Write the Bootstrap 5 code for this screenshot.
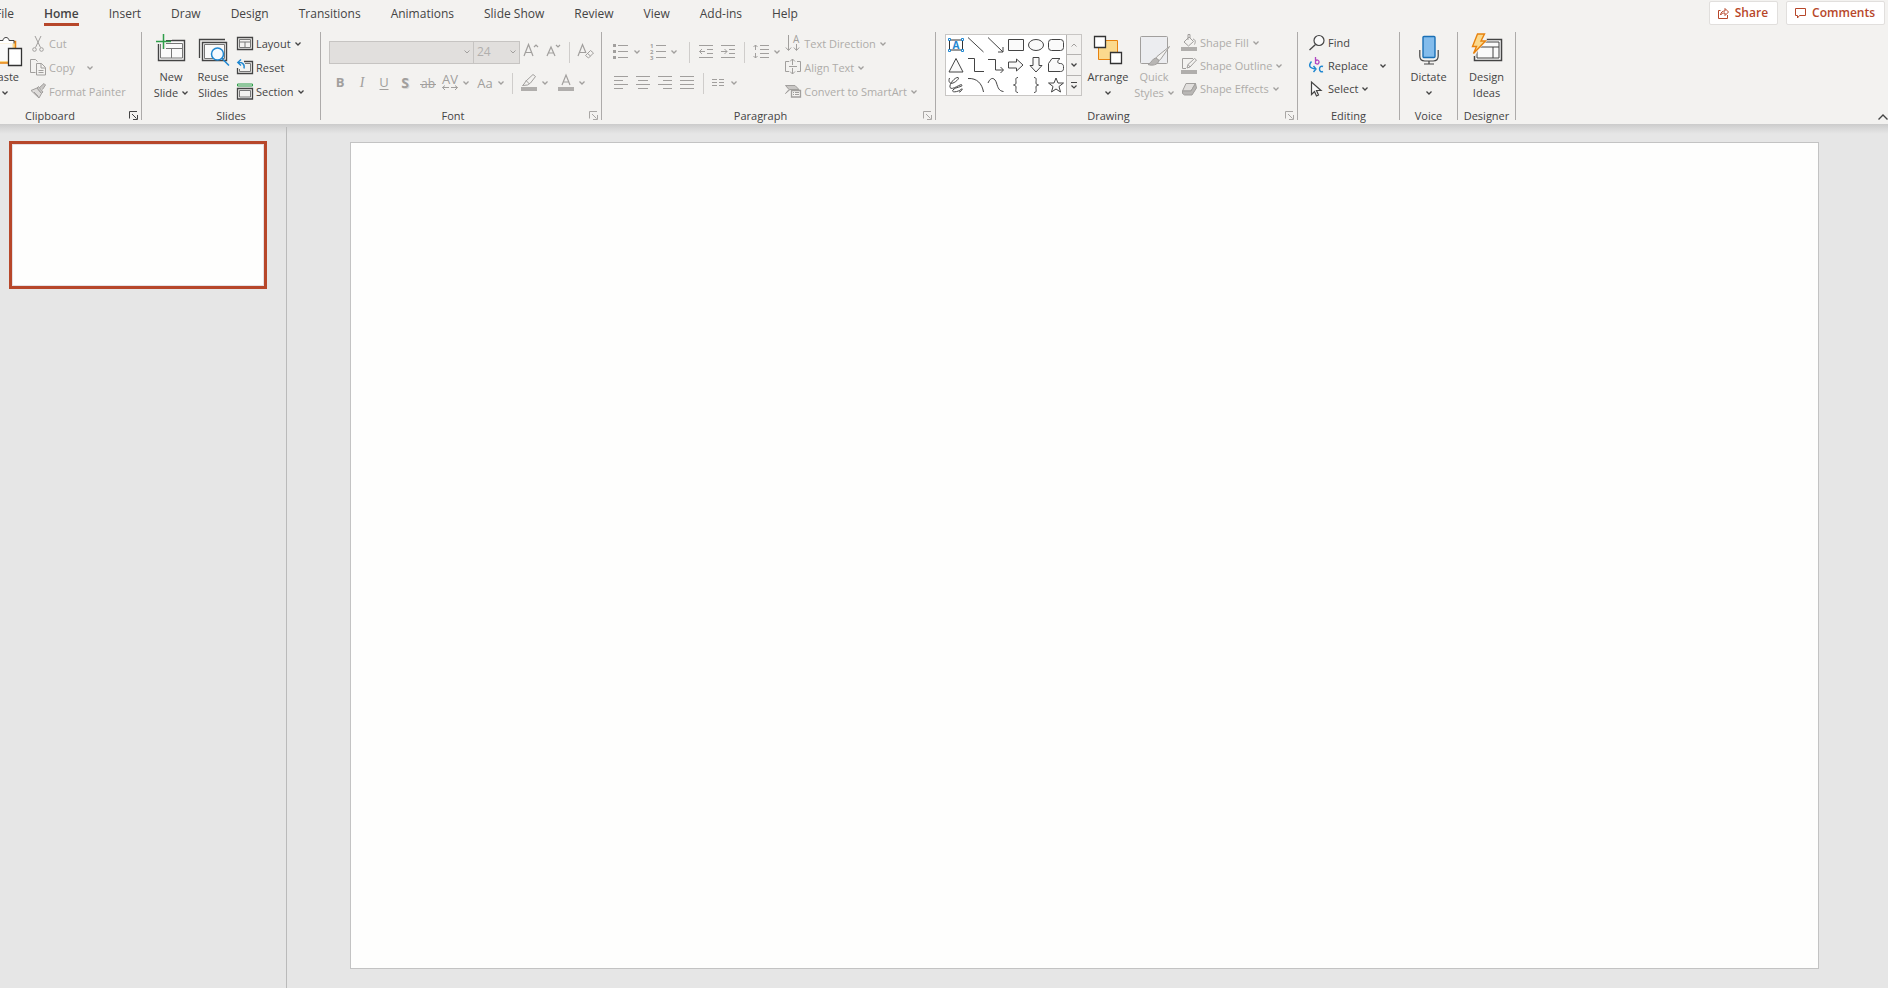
<!DOCTYPE html>
<html lang="en">
<head>
<meta charset="utf-8">
<meta name="viewport" content="width=device-width, initial-scale=1">
<title>Presentation editor</title>
<link href="https://cdn.jsdelivr.net/npm/bootstrap@5.3.0/dist/css/bootstrap.min.css" rel="stylesheet">
<style>
:root{--ink:#444;--dim:#aeaca9;--brand:#b7472a;--line:#adabaa;--panel:#f3f2f0}
body{font-family:"Open Sans","Noto Sans",sans-serif;font-size:11px;line-height:16px;color:var(--ink);background:#e6e6e6;overflow-x:hidden}
svg{display:block;flex:none;overflow:visible;fill:none;stroke:currentColor}
svg text{stroke:none;fill:currentColor}
.ribbon{background:var(--panel);height:124px}

/* tab strip */
.tabs{height:32px;font-size:12px}
.tabs .nav{gap:30px;margin-left:-5px}
.tabs .nav-link{color:var(--ink);padding:5px 0 0;line-height:18px;height:26px;border-bottom:3px solid transparent}
.tabs .nav-link.active{font-weight:600;border-color:var(--brand)}
.top-actions{margin:1px 3px 0 0}
.top-btn{background:#fff;border:1px solid #e1dfdd;border-radius:2px;color:var(--brand);font-size:12px;font-weight:600;line-height:22px;height:24px;padding:0 9px 0 8px;gap:6px}

/* ribbon groups */
.group{border-right:1px solid var(--line);height:88px;display:flex;flex-direction:column;position:relative}
.group-body{flex:1;display:flex}
.group-name{text-align:center;line-height:12px;height:10px}
.launch{position:absolute;right:3px;bottom:0;padding:0;border:0;background:none;color:var(--ink)}
.launch:disabled{color:#a9a7a5}
.has-launch .group-name{padding-right:16px}
.g-clipboard{width:142px}
.g-clipboard .group-name{padding-right:41px}
.g-slides{width:179px}
.g-font{width:281px}
.g-paragraph{width:334px}
.g-drawing{width:362px}
.g-editing{width:102px}
.g-small{width:58px}
.g-slides .group-body,.g-font .group-body,.g-paragraph .group-body,.g-drawing .group-body{padding-left:8px}
.g-paragraph .group-body{padding-right:18px}
.g-editing .group-body{padding-left:11px}

/* ribbon buttons */
.rb{--bs-btn-padding-x:0;--bs-btn-padding-y:0;--bs-btn-font-size:11px;--bs-btn-line-height:16px;--bs-btn-border-width:0;--bs-btn-border-radius:0;--bs-btn-color:var(--ink);--bs-btn-hover-color:var(--ink);--bs-btn-hover-bg:#dddbd9;--bs-btn-disabled-color:var(--dim);--bs-btn-disabled-opacity:1;display:flex;align-items:center;white-space:nowrap}
.rb:disabled svg{color:#a19f9d}
.big{flex-direction:column;justify-content:flex-start;width:42px;padding-top:4px}
.big>svg{margin-bottom:1px}
.big .lbl{display:flex;align-items:center;gap:4px;height:16px}
.big-paste{width:50px;margin-left:-20px}
.big-arrange{width:44px;margin-left:4px}
.big-styles{width:48px}
.rowbtn{height:24px;gap:3px}
.rowbtn .chev{margin-left:1px}
.rowbtn .chev-far{margin-left:9px}
.tight{margin-top:-1px}
.tight .rowbtn{height:23px}
.side{margin-left:3px}
.tools{display:flex;flex-direction:column;gap:7px;padding-top:8px}
.toolrow{display:flex;align-items:center;height:24px}
.ic{width:22px;height:24px;justify-content:center}
.drop{height:24px;gap:5px;padding:0 3px}
.rule{width:1px;height:21px;background:#cfcdcb;margin:0 5px}
.combo{height:23px;border:1px solid #c6c4c2;border-radius:0;background:#e1dfdd url("data:image/svg+xml,%3Csvg xmlns='http://www.w3.org/2000/svg' width='6' height='4' fill='none' stroke='%23a19f9d'%3E%3Cpath d='M.5.5 3 3 5.5.5'/%3E%3C/svg%3E") no-repeat right 3px center;font-size:12px;color:#b1afad;padding:0 3px;appearance:none;opacity:1}
.combo-font{width:145px}
.combo-size{width:47px;margin-left:-1px}

/* shape gallery */
.gallery{height:62px;margin:2px 0 0 1px;background:#fff;border:1px solid #c8c6c4;display:flex}
.cells{display:grid;grid-template-columns:repeat(6,20px);grid-template-rows:repeat(3,20px)}
.cells .rb{justify-content:center}
.scroller{width:15px;display:flex;flex-direction:column;border-left:1px solid #b5b3b1}
.scroller .rb{flex:1;justify-content:center;background:var(--panel)}
.scroller .rb+.rb{border-top:1px solid #b5b3b1}

/* workspace */
.work{min-height:calc(100vh - 124px);background:linear-gradient(#cbcbcb,#dadada 5px,#e6e6e6 10px)}
.slides-pane{width:287px;padding:17px 20px 0 9px;position:relative;flex:none}
.slides-pane::after{content:"";width:1px;background:#bababa;position:absolute;right:0;top:3px;bottom:0}
.thumb{display:block;width:100%;height:148px;border:3px solid var(--brand);background:#fefefd;box-shadow:inset 0 0 0 1px #e6e0e4;padding:0}
.stage{padding:18px 69px 18px 63px}
.slide-page{width:100%;aspect-ratio:1469/827;border:1px solid #c3c3c3;background:#fefefd}
</style>
</head>
<body>
<svg width="0" height="0" class="position-absolute" aria-hidden="true">
<symbol id="cv" viewBox="0 0 6 4"><path d="M.5.5 3 3 5.5.5" stroke-width="1.300"/></symbol>
<symbol id="dl" viewBox="0 0 9 9"><path d="M.5 7.500V.5H8M3 3l4.500 4.500M8.500 4v4.500H4"/></symbol>
</svg>

<header class="ribbon">
<div class="tabs d-flex justify-content-between align-items-start">
<nav class="nav flex-nowrap text-nowrap">
<a class="nav-link" href="#">File</a><a class="nav-link active" href="#" aria-current="page">Home</a><a class="nav-link" href="#">Insert</a><a class="nav-link" href="#">Draw</a><a class="nav-link" href="#">Design</a><a class="nav-link" href="#">Transitions</a><a class="nav-link" href="#">Animations</a><a class="nav-link" href="#">Slide Show</a><a class="nav-link" href="#">Review</a><a class="nav-link" href="#">View</a><a class="nav-link" href="#">Add-ins</a><a class="nav-link" href="#">Help</a>
</nav>
<div class="top-actions d-flex gap-2">
<button type="button" class="top-btn d-flex align-items-center"><svg width="11" height="12"><path d="M2.500 3.500h-2v8h9V8M2.500 8c.5-3 2-4 4.500-4V1.500L10.500 5 7 8.500V6C5 6 3.500 6.500 2.500 8z"/></svg>Share</button>
<button type="button" class="top-btn d-flex align-items-center"><svg width="11" height="12"><path d="M.5 1.500h10v7h-6L2.500 11V8.500h-2z"/></svg>Comments</button>
</div>
</div>

<div class="d-flex">
<!-- Clipboard -->
<section class="group g-clipboard">
<div class="group-body">
<button type="button" class="btn rb big big-paste"><svg width="34" height="32"><path d="M3.500 5.500h24V27H3.500z" fill="#fbd98d" stroke="#e8820e" stroke-width="1.500"/><path d="M6.500 7.500h18V25h-18z" fill="#fafafa" stroke="none"/><path d="M10 7.500V4.500h5c0-4 6-4 6 0h5v3" fill="#fff"/><path d="M20.500 12.500h13v17h-13z" fill="#fff" stroke-width="1.300" stroke="#333"/></svg><span class="lbl">Paste</span><span class="lbl"><svg width="6" height="4"><use href="#cv"/></svg></span></button>
<div>
<button type="button" class="btn rb rowbtn" disabled><svg width="16" height="16"><path d="M5 0l5.500 11.500M11 0 5.500 11.500"/><circle cx="4.500" cy="13.500" r="1.800"/><circle cx="11.500" cy="13.500" r="1.800"/></svg>Cut</button>
<button type="button" class="btn rb rowbtn" disabled><svg width="16" height="16"><path d="M5.500 12.500h-5V-.5h5l2 2M6.500 3.500h5l4 4v7.500h-9zM11 3.500V8h4M8.500 10.500h5M8.500 12.500h5"/></svg>Copy<svg class="chev chev-far" width="6" height="4"><use href="#cv"/></svg></button>
<button type="button" class="btn rb rowbtn" disabled><svg width="16" height="16"><path d="M1 6.500l6-2.500 4.500 5.500L9 14zM4 8l4.500 4.500" fill="#dddbd9"/><path d="M7 4l1.500-1.500L13 8l-1.500 1.500zM9.500 3.500 14-.5l1.500 1.500-3 4.500" fill="#c8c6c4"/></svg>Format Painter</button>
</div>
</div>
<div class="group-name">Clipboard</div>
<button type="button" class="launch" aria-label="Clipboard options"><svg width="9" height="9"><use href="#dl"/></svg></button>
</section>

<!-- Slides -->
<section class="group g-slides">
<div class="group-body">
<button type="button" class="btn rb big"><svg width="30" height="32"><path d="M2.500 4.500h26v20h-26z" stroke-width="1.400" fill="#fafafa"/><path d="M4.500 7.500h22v14.500h-22zM5 12.500h21M15.500 12.500V22" stroke="#777"/><path d="M-1 0h17v4H10v9H5V8H-1z" fill="#f3f2f0" stroke="none"/><path d="M7.500-2v15M0 5.500h15" stroke="#2f9e4a" stroke-width="1.500"/></svg><span class="lbl">New</span><span class="lbl">Slide<svg width="6" height="4"><use href="#cv"/></svg></span></button>
<button type="button" class="btn rb big"><svg width="30" height="32"><path d="M1.500 22V3.500H27" stroke-width="1.300"/><path d="M4.500 6.500h24v18h-24z" stroke-width="1.400" fill="#fafafa"/><path d="M6.500 8.500h20v14h-20z" stroke="#777"/><circle cx="19.500" cy="18" r="6" fill="#f5faff" stroke="#1f87d1" stroke-width="1.500"/><path d="M24 22.500l7 7" stroke="#1f87d1" stroke-width="1.500"/></svg><span class="lbl">Reuse</span><span class="lbl">Slides</span></button>
<div class="side">
<button type="button" class="btn rb rowbtn"><svg width="16" height="16"><path d="M.5 1.500h15v12H.5z" stroke-width="1.300"/><path d="M2.500 3.500h11v8h-11zM3 6h10M8 6v5.500" stroke="#777"/></svg>Layout<svg class="chev" width="6" height="4"><use href="#cv"/></svg></button>
<button type="button" class="btn rb rowbtn"><svg width="16" height="16"><path d="M7 1.500h8.500v12H.5V8" stroke-width="1.300"/><path d="M8 3.500h5.500v8h-11V9" stroke="#777"/><path d="M4-.5.8 2.500 4 5.500M1 2.500c4-.5 7 1.500 6 6" stroke="#1f87d1" stroke-width="1.400"/></svg>Reset</button>
<button type="button" class="btn rb rowbtn"><svg width="16" height="16"><path d="M.5 0h15v2H.5z" stroke="#2f9e4a"/><path d="M.5 4.500h15v10.500H.5z" stroke-width="1.300"/><path d="M2.500 6.500h11v6.500h-11z" stroke="#777"/></svg>Section<svg class="chev" width="6" height="4"><use href="#cv"/></svg></button>
</div>
</div>
<div class="group-name">Slides</div>
</section>

<!-- Font -->
<section class="group g-font has-launch">
<div class="group-body">
<div class="tools">
<div class="toolrow">
<select class="combo combo-font" aria-label="Font" disabled><option></option></select>
<select class="combo combo-size" aria-label="Font size" disabled><option>24</option></select>
<button type="button" class="btn rb ic" aria-label="Increase font size" disabled><svg width="16" height="16"><path d="M1 12 5.500.5 10 12M2.500 8.500h6M11 3l2-2 2 2" stroke-width="1.200"/></svg></button>
<button type="button" class="btn rb ic" aria-label="Decrease font size" disabled><svg width="14" height="16"><path d="M1 12 5 3l4 9M2.500 9h5M10 1l2 2 2-2" stroke-width="1.200"/></svg></button>
<span class="rule"></span>
<button type="button" class="btn rb ic" aria-label="Clear formatting" disabled><svg width="18" height="16"><path d="M1 12 5.500.5 9 9M2.500 8.500h6" stroke-width="1.200"/><path d="M8.500 11.500l5-5 3 2.500-5 5zM10.500 9.500l3 2.500"/></svg></button>
</div>
<div class="toolrow">
<button type="button" class="btn rb ic" disabled aria-label="Bold"><svg width="16" height="16"><text x="8" y="12" text-anchor="middle" font-size="13" font-weight="700">B</text></svg></button>
<button type="button" class="btn rb ic" disabled aria-label="Italic"><svg width="16" height="16"><text x="8" y="12" text-anchor="middle" font-size="14" font-style="italic" font-family="Liberation Serif">I</text></svg></button>
<button type="button" class="btn rb ic" disabled aria-label="Underline"><svg width="16" height="16"><text x="8" y="12" text-anchor="middle" font-size="13">U</text><path d="M3.500 14.500h9"/></svg></button>
<button type="button" class="btn rb ic" disabled aria-label="Shadow"><svg width="16" height="16"><text x="8" y="14" text-anchor="middle" font-size="14" font-weight="700" opacity=".3">S</text><text x="7" y="13" text-anchor="middle" font-size="14" font-weight="700">S</text></svg></button>
<button type="button" class="btn rb ic" disabled aria-label="Strikethrough"><svg width="16" height="16"><text x="8" y="13" text-anchor="middle" font-size="12">ab</text><path d="M0 9.500h16"/></svg></button>
<button type="button" class="btn rb drop" disabled aria-label="Character spacing"><svg width="16" height="16"><text x="8" y="9" text-anchor="middle" font-size="13">AV</text><path d="M3 10.500.5 12.500 3 15M.5 12.500H7M9 12.500h6.500M13 10.500l2.500 2L13 15"/></svg><svg width="6" height="4"><use href="#cv"/></svg></button>
<button type="button" class="btn rb drop" disabled aria-label="Change case"><svg width="18" height="16"><text x="10" y="13" text-anchor="middle" font-size="13">Aa</text></svg><svg width="6" height="4"><use href="#cv"/></svg></button>
<span class="rule"></span>
<button type="button" class="btn rb drop me-1" disabled aria-label="Highlight colour"><svg width="16" height="16"><path d="M3 9l2-3 7-6.500 2.500 2L9.500 8l-3 2-5 .5zM5 5.500 8.500 9"/><path d="M0 14h16" stroke-width="4" stroke="#b0aeac"/></svg><svg width="6" height="4"><use href="#cv"/></svg></button>
<button type="button" class="btn rb drop" disabled aria-label="Font colour"><svg width="16" height="16"><path d="M4 10 8 0l4 10M5.500 7h5" stroke-width="1.200"/><path d="M0 14h16" stroke-width="4" stroke="#b0aeac"/></svg><svg width="6" height="4"><use href="#cv"/></svg></button>
</div>
</div>
</div>
<div class="group-name">Font</div>
<button type="button" class="launch" disabled aria-label="Font options"><svg width="9" height="9"><use href="#dl"/></svg></button>
</section>

<!-- Paragraph -->
<section class="group g-paragraph has-launch">
<div class="group-body justify-content-between">
<div class="tools">
<div class="toolrow">
<button type="button" class="btn rb drop me-1" disabled aria-label="Bullets"><svg width="16" height="16"><path d="M0 1.500h3M0 7.500h3M0 13.500h3" stroke-width="3"/><path d="M5 1.500h10M5 7.500h10M5 13.500h10"/></svg><svg width="6" height="4"><use href="#cv"/></svg></button>
<button type="button" class="btn rb drop me-1" disabled aria-label="Numbering"><svg width="16" height="16"><g font-size="6" font-weight="700"><text x="0" y="4">1</text><text x="0" y="10">2</text><text x="0" y="16">3</text></g><path d="M6 1.500h10M6 7.500h10M6 13.500h10"/></svg><svg width="6" height="4"><use href="#cv"/></svg></button>
<span class="rule"></span>
<button type="button" class="btn rb ic" disabled aria-label="Decrease indent"><svg width="14" height="16"><path d="M0 1.500h14M8 5.500h6M8 9.500h6M0 13.500h14M3 5 .5 7.500 3 10M.5 7.500H6"/></svg></button>
<button type="button" class="btn rb ic" disabled aria-label="Increase indent"><svg width="14" height="16"><path d="M0 1.500h14M8 5.500h6M8 9.500h6M0 13.500h14M3.500 5 6 7.500 3.500 10M0 7.500h6"/></svg></button>
<span class="rule"></span>
<button type="button" class="btn rb drop" disabled aria-label="Line spacing"><svg width="16" height="16"><path d="M2.500 1v5M.5 3l2-2 2 2M2.500 9v5M.5 12l2 2 2-2M7 1.500h9M7 5.500h9M7 9.500h9M7 13.500h9"/></svg><svg width="6" height="4"><use href="#cv"/></svg></button>
</div>
<div class="toolrow">
<button type="button" class="btn rb ic" disabled aria-label="Align left"><svg width="14" height="16"><path d="M0 1.500h14M0 5.500h9M0 9.500h14M0 13.500h9"/></svg></button>
<button type="button" class="btn rb ic" disabled aria-label="Centre"><svg width="14" height="16"><path d="M0 1.500h14M2 5.500h10M0 9.500h14M2 13.500h10"/></svg></button>
<button type="button" class="btn rb ic" disabled aria-label="Align right"><svg width="14" height="16"><path d="M0 1.500h14M5 5.500h9M0 9.500h14M5 13.500h9"/></svg></button>
<button type="button" class="btn rb ic" disabled aria-label="Justify"><svg width="14" height="16"><path d="M0 1.500h14M0 5.500h14M0 9.500h14M0 13.500h14"/></svg></button>
<span class="rule"></span>
<button type="button" class="btn rb drop" disabled aria-label="Columns"><svg width="14" height="16"><path d="M0 4.500h5M7 4.500h5M0 7.500h5M7 7.500h5M0 10.500h5M7 10.500h5"/></svg><svg width="6" height="4"><use href="#cv"/></svg></button>
</div>
</div>
<div>
<button type="button" class="btn rb rowbtn" disabled><svg width="16" height="16"><path d="M3.500-1v15M.8 11.500l2.700 3 2.700-3M11.500 8v6M8.800 11.500l2.700 3 2.700-3"/><text x="8" y="7" font-size="10">A</text></svg>Text Direction<svg class="chev" width="6" height="4"><use href="#cv"/></svg></button>
<button type="button" class="btn rb rowbtn" disabled><svg width="16" height="16"><path d="M4 1.500H.5v10H4M12 1.500h3.500v10H12"/><path d="M7.500-1v6M5 1.500 7.500-1 10 1.500M7.500 8v6M5 11.500 7.500 14l2.500-2.500M4 6.500h8"/></svg>Align Text<svg class="chev" width="6" height="4"><use href="#cv"/></svg></button>
<button type="button" class="btn rb rowbtn" disabled><svg width="16" height="16"><path d="M.5 1.500H10l4 4H5l-4.500 4L4 5.500z" fill="#c8c6c4"/><path d="M6.500 6.500h9v6.500h-9z" fill="#f3f2f0" stroke-width="1.300"/><path d="M8 8.500h1M10 8.500h4M8 10.500h1M10 10.500h4"/></svg>Convert to SmartArt<svg class="chev" width="6" height="4"><use href="#cv"/></svg></button>
</div>
</div>
<div class="group-name">Paragraph</div>
<button type="button" class="launch" disabled aria-label="Paragraph options"><svg width="9" height="9"><use href="#dl"/></svg></button>
</section>

<!-- Drawing -->
<section class="group g-drawing has-launch">
<div class="group-body">
<div class="gallery">
<div class="cells">
<button type="button" class="btn rb" aria-label="Text box"><svg width="16" height="14"><path d="M1.500 2h13v10h-13z" stroke="#333"/><text x="8" y="11" text-anchor="middle" font-size="10" font-weight="700" fill="#1f87d1" color="#1f87d1">A</text><path d="M.5.5h2v2h-2zM13.500.5h2v2h-2zM.5 11.500h2v2h-2zM13.500 11.500h2v2h-2z" fill="#fff" stroke="#1f87d1"/></svg></button>
<button type="button" class="btn rb" aria-label="Line"><svg width="16" height="16"><path d="M0 .5 15.500 15"/></svg></button>
<button type="button" class="btn rb" aria-label="Arrow"><svg width="16" height="16"><path d="M0 .5 15 15M15 10v5h-5"/></svg></button>
<button type="button" class="btn rb" aria-label="Rectangle"><svg width="16" height="12"><path d="M.5.5h15v11H.5z" fill="#fafafa"/></svg></button>
<button type="button" class="btn rb" aria-label="Oval"><svg width="16" height="12"><ellipse cx="8" cy="6" rx="7.500" ry="5.500" fill="#fafafa"/></svg></button>
<button type="button" class="btn rb" aria-label="Rounded rectangle"><svg width="16" height="12"><rect x=".5" y=".5" width="15" height="11" rx="3" fill="#fafafa"/></svg></button>
<button type="button" class="btn rb" aria-label="Triangle"><svg width="16" height="16"><path d="M8 1.500 15 15H1z" fill="#fafafa"/></svg></button>
<button type="button" class="btn rb" aria-label="Elbow"><svg width="16" height="16"><path d="M0 1.500h6.500v13H16"/></svg></button>
<button type="button" class="btn rb" aria-label="Elbow arrow"><svg width="16" height="16"><path d="M0 2.500h7.500V13H15M12.500 10l3 3-3 3"/></svg></button>
<button type="button" class="btn rb" aria-label="Right arrow"><svg width="16" height="14"><path d="M.5 4h8V1L15 7l-6.500 6v-3h-8z" fill="#fafafa"/></svg></button>
<button type="button" class="btn rb" aria-label="Down arrow"><svg width="14" height="16"><path d="M4 .5v8H1L7 15l6-6.500h-3v-8z" fill="#fafafa"/></svg></button>
<button type="button" class="btn rb" aria-label="Freeform"><svg width="16" height="14"><path d="M4 .5h8c-3 2-3 5 0 5h.5c2 0 3 1.500 3 3v2c0 2-1 3-3 3H.5v-8z" fill="#fafafa"/></svg></button>
<button type="button" class="btn rb" aria-label="Scribble"><svg width="16" height="16"><path d="M1.500 1C0 5 2 7 5 6s7-5 5-5.500C7 0 1 7 2 10.500 4 14 13 6 14 8s-7 2-9 5 5 2 8-.5 0 3-2 2.500"/></svg></button>
<button type="button" class="btn rb" aria-label="Arc"><svg width="16" height="16"><path d="M0 1.500c9-.5 14 5 15.500 13.500"/></svg></button>
<button type="button" class="btn rb" aria-label="Curve"><svg width="16" height="16"><path d="M0 6C3-1 7 1 8.500 6S11 14 15.500 14.500"/></svg></button>
<button type="button" class="btn rb" aria-label="Left brace"><svg width="16" height="16"><path d="M10 .5C7 .5 8 3 8 5s0 2.500-2.500 3C8 8.500 8 9 8 11s-1 4.500 2 4.500"/></svg></button>
<button type="button" class="btn rb" aria-label="Right brace"><svg width="16" height="16"><path d="M6 .5c3 0 2 2.500 2 4.500s0 2.500 2.500 3C8 8.500 8 9 8 11s1 4.500-2 4.500"/></svg></button>
<button type="button" class="btn rb" aria-label="Star"><svg width="16" height="16"><path d="M8 1l2 5h5.500L11 9.500l1.500 5.500L8 12l-4.500 3L5 9.500.5 6H6z" fill="#fafafa"/></svg></button>
</div>
<div class="scroller">
<button type="button" class="btn rb" disabled aria-label="Scroll up"><svg width="6" height="4"><path d="M.5 3.500 3 1l2.500 2.500"/></svg></button>
<button type="button" class="btn rb" aria-label="Scroll down"><svg width="6" height="4"><use href="#cv"/></svg></button>
<button type="button" class="btn rb" aria-label="More shapes"><svg width="8" height="7"><path d="M1 .500h6M1.500 3.500 4 6l2.500-2.500" stroke-width="1.200"/></svg></button>
</div>
</div>
<button type="button" class="btn rb big big-arrange"><svg width="28" height="32"><path d="M4.500 4.500h19v19h-19z" fill="#fbd98d" stroke="#e8820e"/><path d="M.5.5h11v11H.5zM16.500 16.500h11v11h-11z" fill="#fff" stroke="#333" stroke-width="1.300"/></svg><span class="lbl">Arrange</span><span class="lbl"><svg width="6" height="4"><use href="#cv"/></svg></span></button>
<button type="button" class="btn rb big big-styles" disabled><svg width="28" height="32"><rect x=".5" y=".5" width="27" height="27" rx="1" fill="#ecedf0"/><path d="M29.500 10.500 17 20.500l-1 1.500 3 2.500 1.500-1z" fill="#f3f2f0"/><path d="M8 28.500c4-2 4-6 8-6.500l3 2.500c-1 4.500-7 5.500-11 4z" fill="#b8b6b4"/></svg><span class="lbl">Quick</span><span class="lbl">Styles<svg width="6" height="4"><use href="#cv"/></svg></span></button>
<div class="tight side">
<button type="button" class="btn rb rowbtn" disabled><svg width="16" height="16"><path d="M3 7l5-5 4.500 4.500-5 4.500zM7 5V-.5h2V3M12 4c3 1 2.500 3 1.500 5.500"/><path d="M0 14h16" stroke-width="4" stroke="#b0aeac"/></svg>Shape Fill<svg class="chev" width="6" height="4"><use href="#cv"/></svg></button>
<button type="button" class="btn rb rowbtn" disabled><svg width="16" height="16"><path d="M12 .5H1.500v10H5M6 10l1-3.500L13.500.5l2 1.500L9 9zM7 6.500 9 9"/><path d="M0 14h16" stroke-width="4" stroke="#b0aeac"/></svg>Shape Outline<svg class="chev" width="6" height="4"><use href="#cv"/></svg></button>
<button type="button" class="btn rb rowbtn" disabled><svg width="16" height="16"><path d="M5 2.500h9.500L10 10H1.500z" fill="#e1dfdd"/><path d="M1.500 10v2.500l2 1.500H11l4.500-7-1-4.500L10 10z" fill="#b8b6b4"/></svg>Shape Effects<svg class="chev" width="6" height="4"><use href="#cv"/></svg></button>
</div>
</div>
<div class="group-name">Drawing</div>
<button type="button" class="launch" disabled aria-label="Drawing options"><svg width="9" height="9"><use href="#dl"/></svg></button>
</section>

<!-- Editing -->
<section class="group g-editing">
<div class="group-body">
<div class="tight">
<button type="button" class="btn rb rowbtn"><svg width="16" height="16"><circle cx="10" cy="5.500" r="5" fill="#fafafa" stroke-width="1.200"/><path d="M6.500 9.500.5 15" stroke-width="1.300"/></svg>Find</button>
<button type="button" class="btn rb rowbtn"><svg width="16" height="16"><path d="M6.500-1v7M6.500 3c1.500-2 4-.5 3.500 1.500S7.500 6.500 6.500 5" stroke="#b146c2" stroke-width="1.300"/><path d="M14 8.500c-2-1-3.500.5-3.500 2.500S12 14.500 14 13.500M2.500 3.500C-.5 7-.5 10 7 11M4.500 8 7 11l-2.500 3" stroke="#1f87d1" stroke-width="1.400"/></svg>Replace<svg class="chev chev-far" width="6" height="4"><use href="#cv"/></svg></button>
<button type="button" class="btn rb rowbtn"><svg width="16" height="16"><path d="M2.500 1v12.500l3-3 2 4.500 2-1-2-4.500H12z" fill="#fafafa" stroke-width="1.200"/></svg>Select<svg class="chev" width="6" height="4"><use href="#cv"/></svg></button>
</div>
</div>
<div class="group-name">Editing</div>
</section>

<!-- Voice -->
<section class="group g-small">
<div class="group-body justify-content-center">
<button type="button" class="btn rb big"><svg width="20" height="32"><rect x="4" y=".5" width="12" height="21" rx="1" fill="#83bcec" stroke="#1a6fb5" stroke-width="1.400"/><path d="M.8 14v6c0 3 2 5 5 5h8.400c3 0 5-2 5-5v-6M10 25v3M5 28h10" stroke-width="1.200"/></svg><span class="lbl">Dictate</span><span class="lbl"><svg width="6" height="4"><use href="#cv"/></svg></span></button>
</div>
<div class="group-name">Voice</div>
</section>

<!-- Designer -->
<section class="group g-small">
<div class="group-body justify-content-center">
<button type="button" class="btn rb big"><svg width="30" height="32"><path d="M2.500 3.500h27v21h-27z" fill="#fafafa" stroke-width="1.500"/><path d="M5 6h22v16H5zM5 11h22M21 11v11"/><path d="M-1-3h15l1 8-8 8-4 7h-4z" fill="#f3f2f0" stroke="none"/><path d="M5.500-2h7L9 5h4.500L1.500 17.500l3-7H.5z" fill="#fbd98d" stroke="#e8820e" stroke-width="1.400"/></svg><span class="lbl">Design</span><span class="lbl">Ideas</span></button>
</div>
<div class="group-name">Designer</div>
</section>
<button type="button" class="btn rb ms-auto align-self-end" aria-label="Collapse ribbon"><svg width="10" height="6"><path d="M.5 5.500 5 1l4.500 4.500" stroke-width="1.400"/></svg></button>
</div>
</header>

<main class="work d-flex">
<aside class="slides-pane"><button type="button" class="thumb" aria-label="Slide 1"></button></aside>
<div class="stage flex-grow-1"><div class="slide-page"></div></div>
</main>
<script src="https://cdn.jsdelivr.net/npm/bootstrap@5.3.0/dist/js/bootstrap.bundle.min.js"></script>
</body>
</html>
